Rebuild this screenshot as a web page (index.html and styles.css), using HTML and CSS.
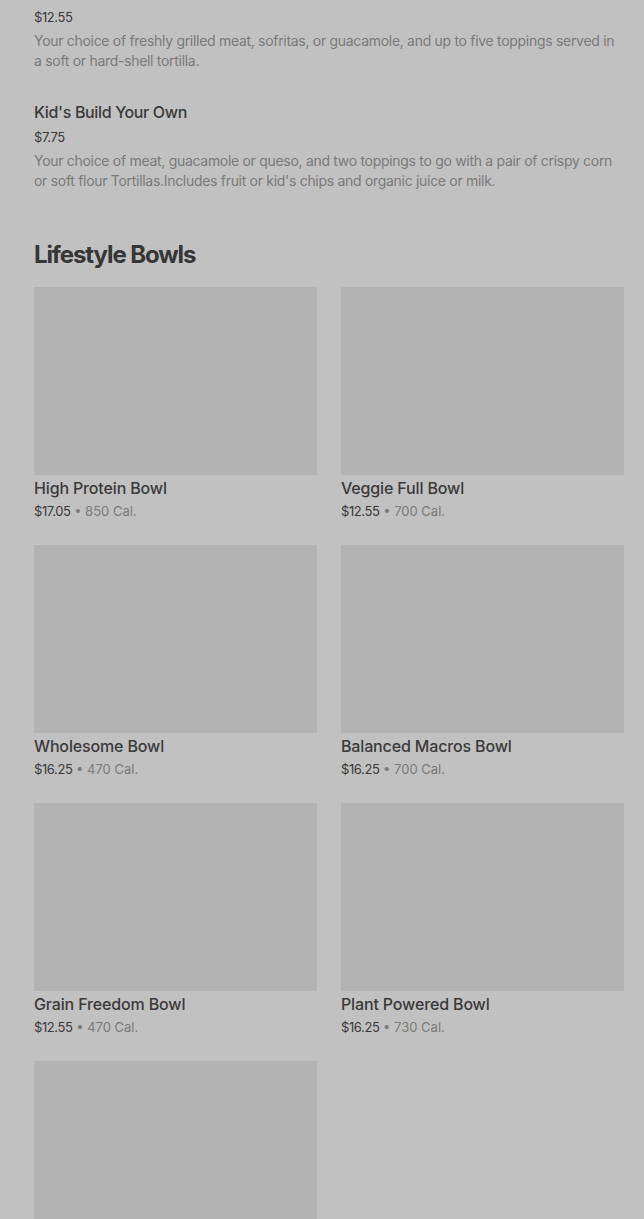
FILE: index.html
```html
<!DOCTYPE html>
<html lang="en">
<head>
  <meta charset="UTF-8">
  <meta name="viewport" content="width=device-width, initial-scale=1.0">
  <title>Menu</title>
  <link rel="stylesheet" href="styles.css">
</head>
<body>
  <!-- Items list (scrolled, first title off screen) -->
  <section class="items">
    <div class="item">
      <h3 class="item-title">Tacos</h3>
      <p class="item-price">$12.55</p>
      <p class="item-desc">Your choice of freshly grilled meat, sofritas, or guacamole, and up to five toppings served in a soft or hard-shell tortilla.</p>
    </div>
    <div class="item">
      <h3 class="item-title">Kid's Build Your Own</h3>
      <p class="item-price">$7.75</p>
      <p class="item-desc">Your choice of meat, guacamole or queso, and two toppings to go with a pair of crispy corn or soft flour Tortillas.Includes fruit or kid's chips and organic juice or milk.</p>
    </div>
  </section>

  <section class="category">
    <h2 class="category-title">Lifestyle Bowls</h2>
    <div class="grid">
      <div class="card">
        <div class="card-img"></div>
        <h3 class="card-title">High Protein Bowl</h3>
        <p class="card-meta"><span class="price">$17.05</span> • 850 Cal.</p>
      </div>
      <div class="card">
        <div class="card-img"></div>
        <h3 class="card-title">Veggie Full Bowl</h3>
        <p class="card-meta"><span class="price">$12.55</span> • 700 Cal.</p>
      </div>
      <div class="card">
        <div class="card-img"></div>
        <h3 class="card-title">Wholesome Bowl</h3>
        <p class="card-meta"><span class="price">$16.25</span> • 470 Cal.</p>
      </div>
      <div class="card">
        <div class="card-img"></div>
        <h3 class="card-title">Balanced Macros Bowl</h3>
        <p class="card-meta"><span class="price">$16.25</span> • 700 Cal.</p>
      </div>
      <div class="card">
        <div class="card-img"></div>
        <h3 class="card-title">Grain Freedom Bowl</h3>
        <p class="card-meta"><span class="price">$12.55</span> • 470 Cal.</p>
      </div>
      <div class="card">
        <div class="card-img"></div>
        <h3 class="card-title">Plant Powered Bowl</h3>
        <p class="card-meta"><span class="price">$16.25</span> • 730 Cal.</p>
      </div>
      <div class="card">
        <div class="card-img card-img-last"></div>
      </div>
    </div>
  </section>
</body>
</html>
```

FILE: styles.css
```css
body {
  margin: 0;
  padding: 0 20px 0 34px;
  background-color: #c1c1c1;
  font-family: 'Inter', 'Roboto', sans-serif;
  color: #333333;
  overflow: hidden;
}

h2, h3, p {
  margin: 0;
}

.items {
  margin-top: -20px;
  display: flex;
  flex-direction: column;
  gap: 29px;
}

.item-title {
  font-size: 16px;
  font-weight: 500;
  line-height: 24px;
  letter-spacing: -0.35px;
  color: #3a3a3a;
}

.item-price {
  margin-top: 3px;
  font-size: 13px;
  line-height: 20px;
  color: #3a3a3a;
  letter-spacing: -0.4px;
}

.item-desc {
  margin-top: 4px;
  font-size: 14px;
  line-height: 20px;
  color: #7a7a7a;
  letter-spacing: -0.3px;
}

.category {
  margin-top: 48px;
}

.category-title {
  font-size: 24px;
  font-weight: 700;
  line-height: 32px;
  letter-spacing: -1.1px;
  color: #363636;
}

.grid {
  margin-top: 16px;
  display: grid;
  grid-template-columns: 283px 283px;
  column-gap: 24px;
  row-gap: 24px;
}

.card-img {
  height: 188px;
  background-color: #b3b3b3;
}

.card-img-last {
  height: 200px;
}

.card-title {
  margin-top: 1px;
  font-size: 16px;
  font-weight: 500;
  line-height: 24px;
  letter-spacing: -0.15px;
  color: #3a3a3a;
}

.card-meta {
  margin-top: 1px;
  font-size: 13px;
  line-height: 20px;
  color: #7a7a7a;
}

.card-meta .price {
  color: #3a3a3a;
  letter-spacing: -0.4px;
}
```
